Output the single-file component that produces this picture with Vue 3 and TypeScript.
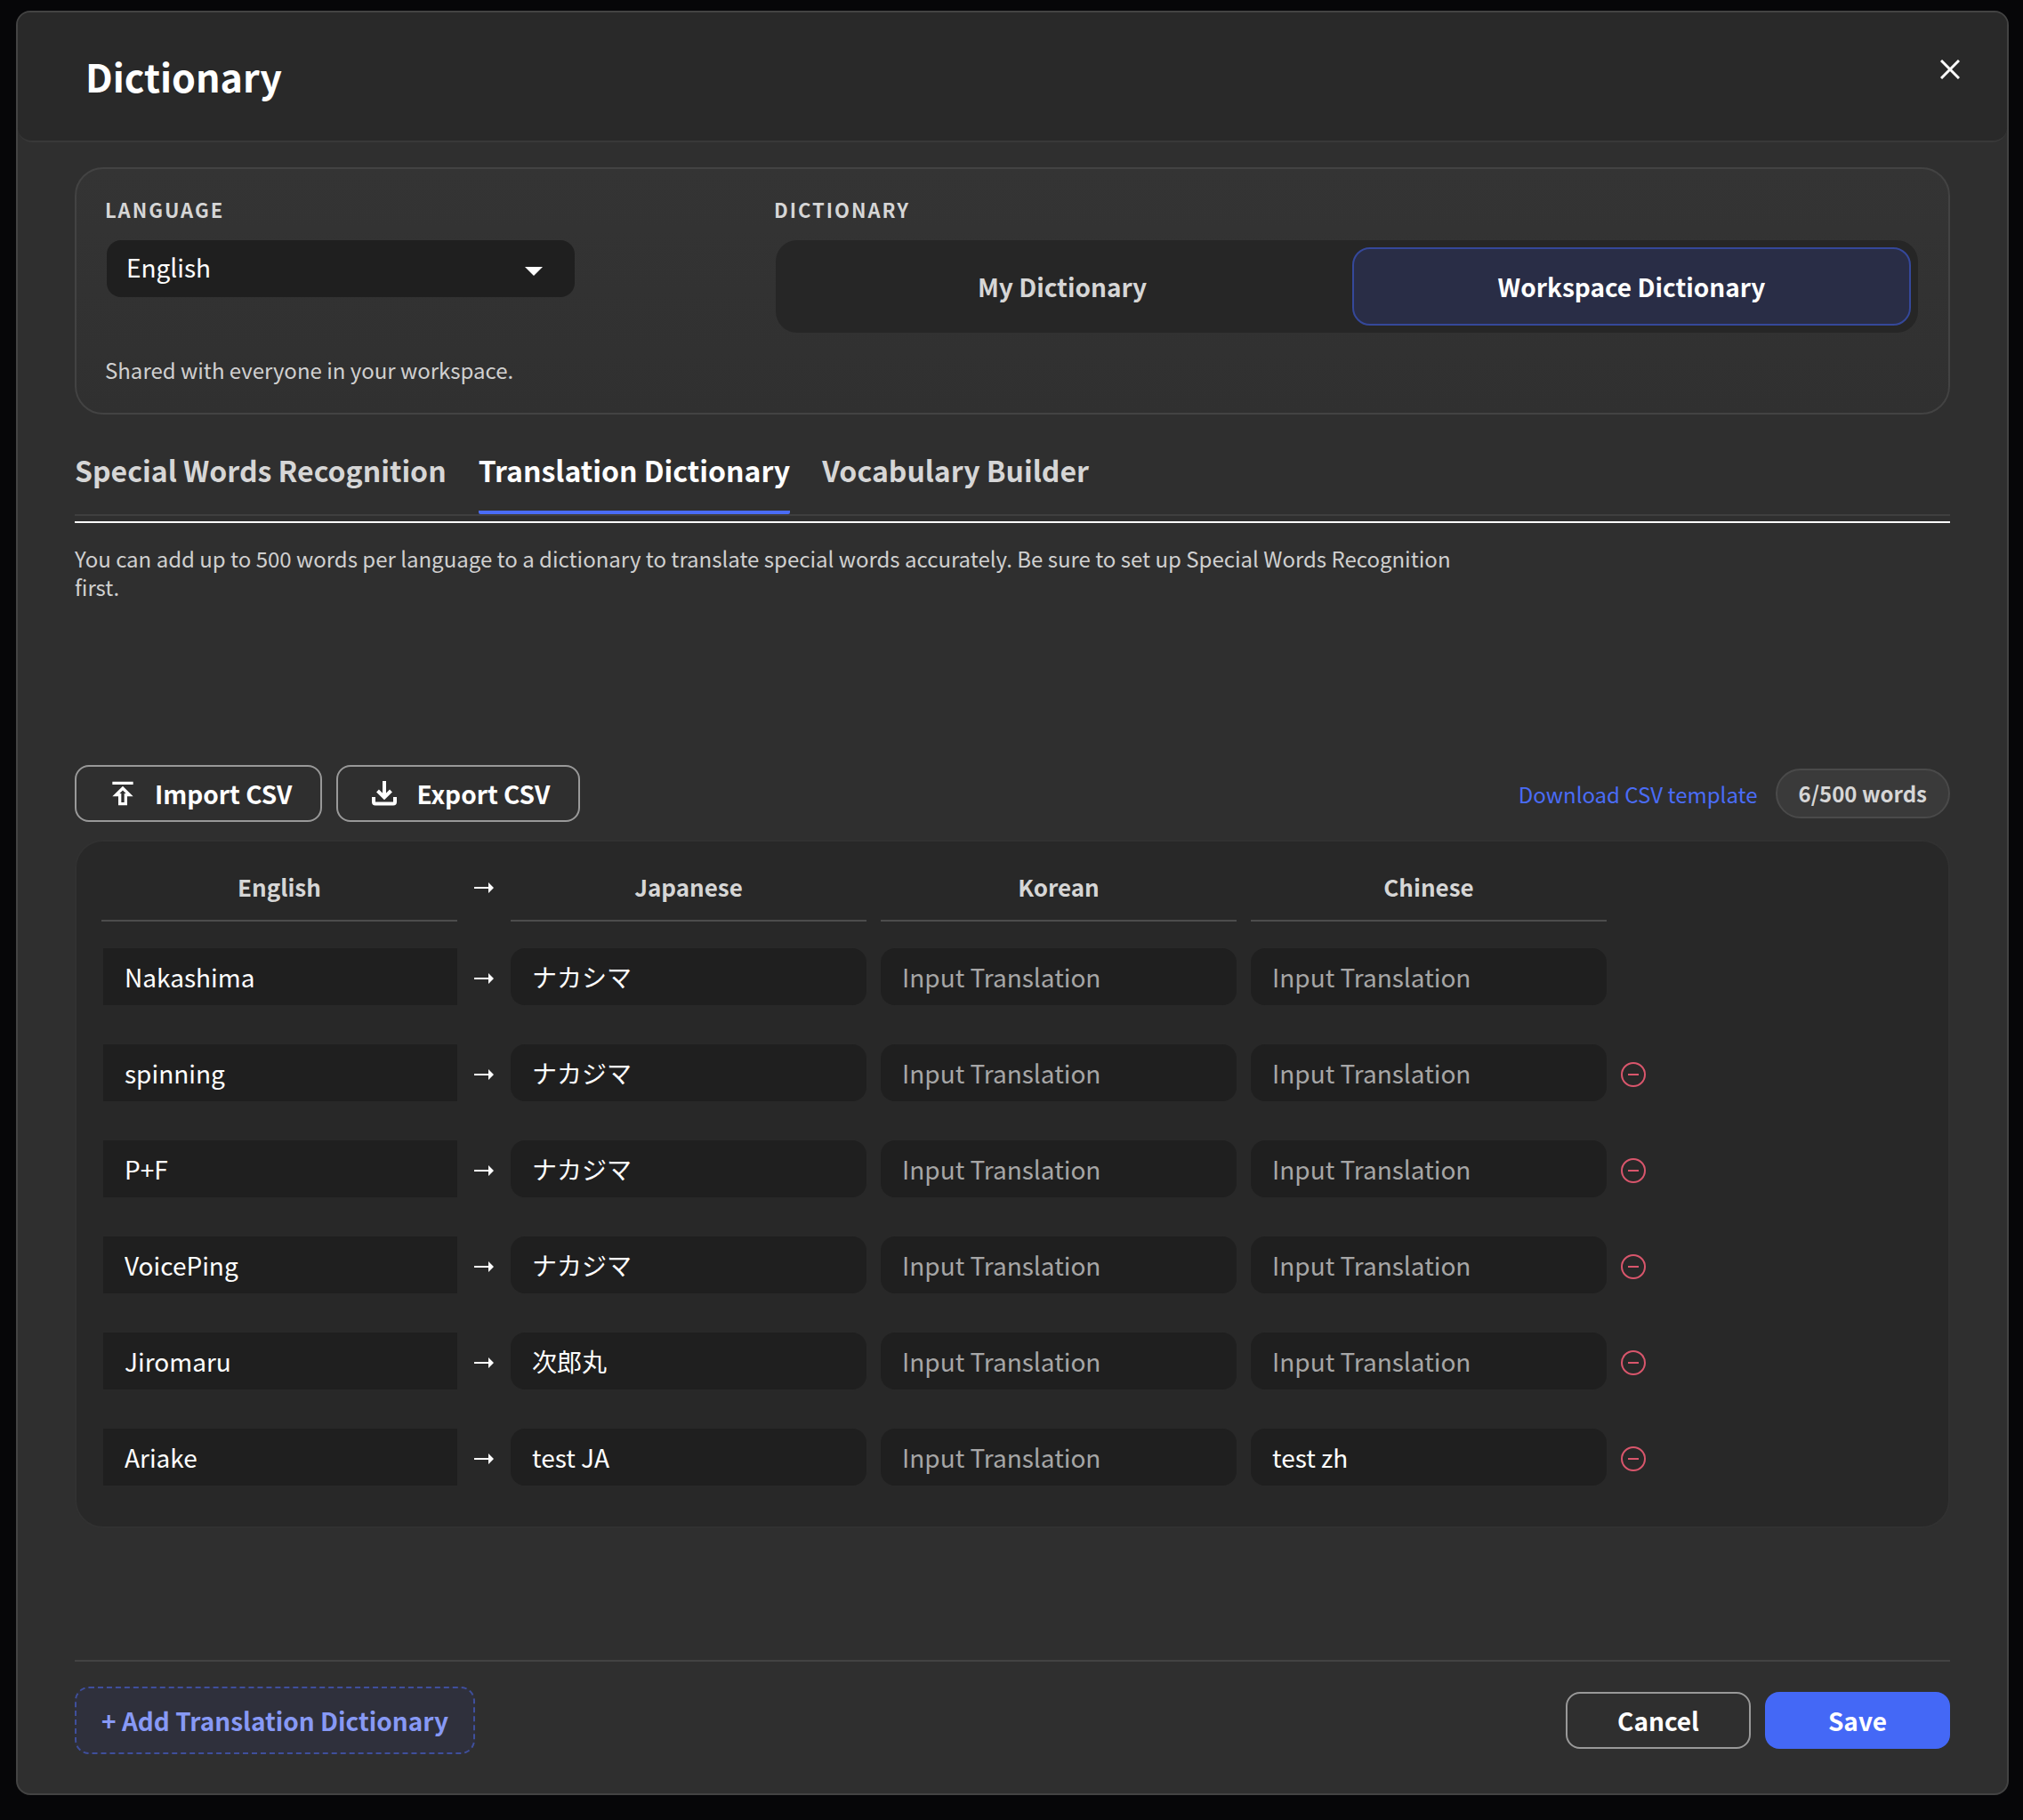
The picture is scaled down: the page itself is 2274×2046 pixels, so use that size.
<script setup lang="ts">
import { ref } from 'vue'

interface Entry {
  source: string
  ja: string
  ko: string
  zh: string
}

const language = ref('English')
const scope = ref<'my' | 'workspace'>('workspace')
const activeTab = ref(1)
const tabs = ['Special Words Recognition', 'Translation Dictionary', 'Vocabulary Builder']
const targets: { key: 'ja' | 'ko' | 'zh'; label: string }[] = [
  { key: 'ja', label: 'Japanese' },
  { key: 'ko', label: 'Korean' },
  { key: 'zh', label: 'Chinese' },
]

const entries = ref<Entry[]>([
  { source: 'Nakashima', ja: 'ナカシマ', ko: '', zh: '' },
  { source: 'spinning', ja: 'ナカジマ', ko: '', zh: '' },
  { source: 'P+F', ja: 'ナカジマ', ko: '', zh: '' },
  { source: 'VoicePing', ja: 'ナカジマ', ko: '', zh: '' },
  { source: 'Jiromaru', ja: '次郎丸', ko: '', zh: '' },
  { source: 'Ariake', ja: 'test JA', ko: '', zh: 'test zh' },
])

function addEntry() {
  entries.value.push({ source: '', ja: '', ko: '', zh: '' })
}
function removeEntry(index: number) {
  entries.value.splice(index, 1)
}
</script>

<template>
  <div class="backdrop">
    <section class="modal" role="dialog" aria-labelledby="dialog-title">
      <header class="modal-header">
        <h1 id="dialog-title">Dictionary</h1>
        <button class="close" type="button" aria-label="Close">
          <svg viewBox="0 0 22 22" width="22" height="22"><path d="M1 1 21 21M21 1 1 21" /></svg>
        </button>
      </header>

      <div class="modal-body">
        <div class="settings">
          <div class="settings-row">
            <div class="field language-field">
              <label class="caption" for="language">LANGUAGE</label>
              <div class="select-wrap">
                <select id="language" v-model="language">
                  <option>English</option>
                  <option>Japanese</option>
                  <option>Korean</option>
                  <option>Chinese</option>
                </select>
                <svg class="caret" viewBox="0 0 20 10" width="20" height="10"><path d="M0 0H20L10 10Z" /></svg>
              </div>
            </div>
            <div class="field scope-field">
              <span id="scope-caption" class="caption">DICTIONARY</span>
              <div class="segment" role="group" aria-labelledby="scope-caption">
                <button type="button" :class="{ selected: scope === 'my' }" @click="scope = 'my'">My Dictionary</button>
                <button type="button" :class="{ selected: scope === 'workspace' }" @click="scope = 'workspace'">
                  Workspace Dictionary
                </button>
              </div>
            </div>
          </div>
          <p class="note">Shared with everyone in your workspace.</p>
        </div>

        <nav class="tabs" role="tablist">
          <button
            v-for="(tab, i) in tabs"
            :key="tab"
            type="button"
            role="tab"
            :aria-selected="activeTab === i"
            :class="{ active: activeTab === i }"
            @click="activeTab = i"
          >{{ tab }}</button>
        </nav>
        <hr class="rule" />

        <p class="description">
          You can add up to 500 words per language to a dictionary to translate special words accurately. Be sure to set
          up Special Words Recognition first.
        </p>

        <div class="toolbar">
          <button class="outlined" type="button">
            <svg class="icon" viewBox="0 0 24 24" width="40" height="40">
              <path d="M5 4v2h14V4H5zm0 10h4v6h6v-6h4l-7-7-7 7zm8-2v6h-2v-6H9.830L12 9.830 14.170 12H13z" />
            </svg>
            Import CSV
          </button>
          <button class="outlined" type="button">
            <svg class="icon stroked" viewBox="0 0 40 40" width="40" height="40">
              <path d="M20 6V24M12.500 17 20 24.500 27.500 17M8 24V29.500Q8 31.500 10 31.500H30Q32 31.500 32 29.500V24" />
            </svg>
            Export CSV
          </button>
          <div class="toolbar-end">
            <a class="template-link" href="#template">Download CSV template</a>
            <span class="count">{{ entries.length }}/500 words</span>
          </div>
        </div>

        <div class="panel">
          <table>
            <thead>
              <tr>
                <th class="word" scope="col"><span>English</span></th>
                <td class="arrow">
                  <svg viewBox="0 0 24 16" width="24" height="16"><path d="M1 7H17V2L23 8 17 14V9H1Z" /></svg>
                </td>
                <th v-for="t in targets" :key="t.key" class="word" scope="col"><span>{{ t.label }}</span></th>
                <td class="action"></td>
              </tr>
            </thead>
            <tbody>
              <tr v-for="(entry, i) in entries" :key="i">
                <td><input v-model="entry.source" class="source" type="text" aria-label="English" /></td>
                <td class="arrow">
                  <svg viewBox="0 0 24 16" width="24" height="16"><path d="M1 7H17V2L23 8 17 14V9H1Z" /></svg>
                </td>
                <td v-for="t in targets" :key="t.key">
                  <input v-model="entry[t.key]" type="text" placeholder="Input Translation" :aria-label="t.label" />
                </td>
                <td class="action">
                  <button v-if="i > 0" type="button" aria-label="Remove entry" @click="removeEntry(i)">
                    <svg viewBox="0 0 28 28" width="28" height="28">
                      <circle cx="14" cy="14" r="13" /><path d="M8 14H20" />
                    </svg>
                  </button>
                </td>
              </tr>
            </tbody>
          </table>
        </div>

        <footer class="modal-footer">
          <button class="add" type="button" @click="addEntry">+ Add Translation Dictionary</button>
          <button class="outlined wide" type="button">Cancel</button>
          <button class="primary wide" type="button">Save</button>
        </footer>
      </div>
    </section>
  </div>
</template>

<style>
body {
  margin: 0;
  background: #060608;
}
</style>

<style scoped>
* {
  box-sizing: border-box;
}
.backdrop {
  padding: 12px 16px 28px 18px;
  font-family: 'Noto Sans CJK JP', 'Noto Sans', sans-serif;
  font-size: 28px;
  color: #fff;
}
button,
input,
select {
  font: inherit;
  color: inherit;
  margin: 0;
}
button {
  padding: 0;
  border: 0;
  background: none;
  cursor: pointer;
}
.modal {
  border: 2px solid #434343;
  border-radius: 16px;
  background: #2f2f2f;
  overflow: hidden;
}
.modal-header {
  display: flex;
  justify-content: space-between;
  align-items: flex-start;
  height: 146px;
  padding: 42px 42px 0 76px;
  border-bottom: 2px solid #383838;
  border-radius: 0 0 16px 16px;
  background: #292929;
}
h1 {
  margin: 0;
  font-size: 43px;
  line-height: 58px;
  font-weight: 700;
}
.close {
  display: flex;
  padding: 11px;
}
.close svg {
  fill: none;
  stroke: #fff;
  stroke-width: 3;
}
.modal-body {
  padding: 28px 64px 44px;
}
.settings {
  padding: 32px 34px 30px 32px;
  border: 2px solid #434343;
  border-radius: 32px;
  background: linear-gradient(#343434, #303030);
}
.settings-row {
  display: flex;
  justify-content: space-between;
}
.field {
  display: flex;
  flex-direction: column;
}
.language-field {
  width: 528px;
}
.scope-field {
  width: 1286px;
}
.caption {
  height: 48px;
  font-size: 22px;
  line-height: 26px;
  font-weight: 700;
  letter-spacing: 2px;
  color: #d6d6d6;
}
.select-wrap {
  position: relative;
  padding-left: 2px;
}
select {
  display: block;
  width: 100%;
  height: 64px;
  padding: 0 22px 4px;
  border: 0;
  border-radius: 16px;
  background: #1f1f1f;
  appearance: none;
}
.caret {
  position: absolute;
  right: 36px;
  top: 30px;
  fill: #fff;
  pointer-events: none;
}
.segment {
  display: grid;
  grid-template-columns: 1fr 1fr;
  gap: 12px;
  margin-left: 2px;
  padding: 8px;
  border-radius: 24px;
  background: #262626;
}
.segment button {
  height: 88px;
  border: 2px solid transparent;
  border-radius: 20px;
  font-weight: 700;
  color: #d6d6d6;
}
.segment .selected {
  border-color: #35489a;
  background: #292d46;
  color: #fff;
}
.note {
  margin: 24px 0 0;
  font-size: 24px;
  line-height: 36px;
  color: #d0d0d0;
}
.tabs {
  display: flex;
  gap: 36px;
  margin-top: 28px;
  border-bottom: 2px solid #3f3f3f;
}
.tabs button {
  height: 84px;
  padding-bottom: 12px;
  border-bottom: 4px solid transparent;
  border-radius: 2px;
  font-size: 32px;
  line-height: 48px;
  font-weight: 700;
  color: #d6d6d6;
}
.tabs .active {
  border-bottom-color: #4a6cf7;
  color: #fff;
}
.rule {
  margin: 6px 0 0;
  border: 0;
  border-top: 2px solid #fff;
}
.description {
  max-width: 1580px;
  min-height: 248px;
  margin: 24px 0 0;
  font-size: 24px;
  line-height: 32px;
  color: #d0d0d0;
}
.toolbar {
  display: flex;
  align-items: center;
  gap: 16px;
}
.toolbar-end {
  display: flex;
  align-items: center;
  gap: 20px;
  margin-left: auto;
}
.outlined {
  display: flex;
  align-items: center;
  justify-content: center;
  gap: 16px;
  height: 64px;
  padding: 0 32px;
  border: 2px solid #999;
  border-radius: 16px;
  font-weight: 700;
}
.icon {
  fill: #fff;
}
.icon.stroked {
  fill: none;
  stroke: #fff;
  stroke-width: 4;
}
.template-link {
  font-size: 24px;
  color: #4a6cf7;
  text-decoration: none;
}
.count {
  padding: 0 24px;
  border: 2px solid #4a4a4a;
  border-radius: 28px;
  background: #3a3a3a;
  font-size: 24px;
  line-height: 52px;
  font-weight: 700;
  color: #d6d6d6;
}
.panel {
  margin-top: 20px;
  padding: 24px 12px;
  border: 2px solid #313131;
  border-radius: 32px;
  background: #282828;
}
table {
  border-spacing: 16px 0;
}
th,
td {
  padding: 0;
}
th.word {
  width: 400px;
  padding-bottom: 8px;
  font-weight: 700;
  color: #d6d6d6;
}
th.word span {
  display: block;
  height: 66px;
  line-height: 54px;
  border-bottom: 2px solid #4c4c4c;
  font-size: 26px;
}
.arrow {
  width: 28px;
  padding-top: 3px;
}
thead .arrow {
  padding-top: 20px;
  vertical-align: top;
}
.arrow svg {
  display: block;
  margin: 0 auto;
  fill: #fff;
}
tbody td {
  height: 108px;
}
input {
  display: block;
  width: 100%;
  height: 64px;
  padding: 0 24px;
  border: 0;
  border-radius: 16px;
  outline: 0;
  background: #1f1f1f;
}
input.source {
  border-left: 2px solid #282828;
  border-radius: 0;
}
input::placeholder {
  color: #a6a6a6;
  opacity: 1;
}
.action {
  width: 28px;
  padding-top: 3px;
}
.action button {
  display: block;
}
.action svg {
  display: block;
  fill: none;
  stroke: #d9566c;
  stroke-width: 2;
}
.modal-footer {
  display: flex;
  align-items: center;
  gap: 16px;
  margin-top: 148px;
  padding-top: 28px;
  border-top: 2px solid #434343;
}
.add {
  height: 76px;
  margin-right: auto;
  padding: 0 28px;
  border: 2px dashed #3f4f9c;
  border-radius: 16px;
  background: #2f303c;
  font-weight: 700;
  color: #8799f5;
}
.wide {
  width: 208px;
  height: 64px;
  padding: 0;
}
.primary {
  border-radius: 16px;
  background: #4468f6;
  font-weight: 700;
}
</style>
